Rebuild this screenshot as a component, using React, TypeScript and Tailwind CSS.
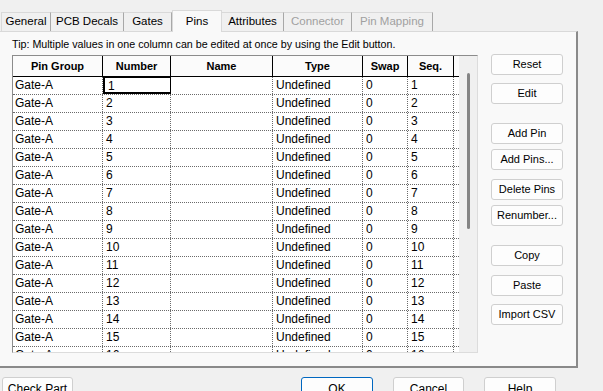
import React from 'react';

const tabs = [
  { label: 'General', w: 'w-[50px]' },
  { label: 'PCB Decals', w: 'w-[73px]' },
  { label: 'Gates', w: 'w-[48px]' },
  { label: 'Pins', w: 'w-[50px]', active: true },
  { label: 'Attributes', w: 'w-[62px]' },
  { label: 'Connector', w: 'w-[68px]', disabled: true },
  { label: 'Pin Mapping', w: 'w-[81px]', disabled: true },
];

const cols = [
  { label: 'Pin Group', w: 'w-[90px]' },
  { label: 'Number', w: 'w-[68px]' },
  { label: 'Name', w: 'w-[102px]' },
  { label: 'Type', w: 'w-[90px]' },
  { label: 'Swap', w: 'w-[45px]' },
  { label: 'Seq.', w: 'w-[46px]' },
];

const rows = Array.from({ length: 16 }, (_, i) => ['Gate-A', String(i + 1), '', 'Undefined', '0', String(i + 1)]);

const sideButtons = [
  { label: 'Reset', mt: 'mt-0' },
  { label: 'Edit', mt: 'mt-[8px]' },
  { label: 'Add Pin', mt: 'mt-[19px]' },
  { label: 'Add Pins...', mt: 'mt-[5px]' },
  { label: 'Delete Pins', mt: 'mt-[9px]' },
  { label: 'Renumber...', mt: 'mt-[5px]' },
  { label: 'Copy', mt: 'mt-[19px]' },
  { label: 'Paste', mt: 'mt-[9px]' },
  { label: 'Import CSV', mt: 'mt-[8px]' },
];

const SideButton = ({ label, mt }: { label: string; mt: string }) => (
  <button
    className={`${mt} w-[72px] h-[21px] flex items-center justify-center rounded-[3px] border border-[#cfcfcf] bg-[#fdfdfd] text-[11px] text-black leading-none`}
  >
    {label}
  </button>
);

export default function App() {
  return (
    <div className="w-[603px] h-[391px] overflow-hidden bg-[#f0f0f0] font-['Liberation_Sans',Arial,sans-serif] text-black select-none">
      {/* Tab strip */}
      <div className="h-[31px] flex items-end pl-[1px]">
        {tabs.map((t) =>
          t.active ? (
            <div
              key={t.label}
              className={`${t.w} h-[22px] -mb-px z-10 flex items-start justify-center pt-[2px] bg-[#f9f9f9] border border-b-0 border-[#d9d9d9] text-[11.5px]`}
            >
              {t.label}
            </div>
          ) : (
            <div
              key={t.label}
              className={`${t.w} h-[19px] flex items-center justify-center border-t border-r border-[#d9d9d9] border-r-[#a8a8a8] first:border-l text-[11.5px] ${
                t.disabled ? 'text-[#a0a0a0]' : 'text-black'
              }`}
            >
              {t.label}
            </div>
          )
        )}
      </div>

      {/* Tab panel */}
      <div className="w-[578px] h-[337px] bg-[#f9f9f9] border-t border-[#d9d9d9] border-r-2 border-b-2 border-r-[#8a8a8a] border-b-[#8a8a8a] pl-[12px]">
        <div className="h-[23px] pt-[6px] text-[10.7px] leading-[13px]">
          Tip: Multiple values in one column can be edited at once by using the Edit button.
        </div>

        <div className="flex items-start">
          {/* Grid */}
          <div className="w-[466px] h-[298px] border border-[#8c8c8c] border-r-[#dcdcdc] border-b-[#dcdcdc] bg-white flex overflow-hidden">
            <div className="w-[446px] h-full overflow-hidden">
              <div className="flex h-[21px] border-b border-black bg-[#fbfbfb]">
                {cols.map((c) => (
                  <div
                    key={c.label}
                    className={`${c.w} shrink-0 border-r border-black flex items-center justify-center text-[11px] font-bold`}
                  >
                    {c.label}
                  </div>
                ))}
              </div>
              {rows.map((r, ri) => (
                <div key={ri} className="flex h-[18px] border-b border-dotted border-[#6a6a6a]">
                  {r.map((v, ci) => (
                    <div
                      key={ci}
                      className={`${cols[ci].w} shrink-0 border-r border-dotted border-[#6a6a6a] text-[12px] leading-[17px] ${
                        ci === 0 ? 'pl-[2px]' : 'pl-[3px]'
                      } ${ri === 0 && ci === 1 ? 'border-2 border-solid border-black -mt-px pl-[2px]' : ''}`}
                    >
                      {v}
                    </div>
                  ))}
                </div>
              ))}
            </div>
            <div className="w-[18px] h-full bg-[#f0f0f0] pl-[8px] pt-[17px]">
              <div className="w-[3px] h-[156px] bg-[#858585] rounded-full" />
            </div>
          </div>

          {/* Side buttons */}
          <div className="ml-[13px] -mt-px flex flex-col">
            {sideButtons.map((b) => (
              <SideButton key={b.label} label={b.label} mt={b.mt} />
            ))}
          </div>
        </div>
      </div>

      {/* Dialog buttons */}
      <div className="flex mt-[9px] text-[12px]">
        <button className="ml-[2px] w-[71px] h-[24px] rounded-[3px] border border-[#cfcfcf] bg-[#fdfdfd] flex items-center justify-center">
          Check Part
        </button>
        <button className="ml-[228px] w-[72px] h-[24px] rounded-[3px] border border-[#0067c0] bg-[#fdfdfd] flex items-center justify-center">
          OK
        </button>
        <button className="ml-[20px] w-[71px] h-[24px] rounded-[3px] border border-[#cfcfcf] bg-[#fdfdfd] flex items-center justify-center">
          Cancel
        </button>
        <button className="ml-[20px] w-[72px] h-[24px] rounded-[3px] border border-[#cfcfcf] bg-[#fdfdfd] flex items-center justify-center">
          Help
        </button>
      </div>
    </div>
  );
}
